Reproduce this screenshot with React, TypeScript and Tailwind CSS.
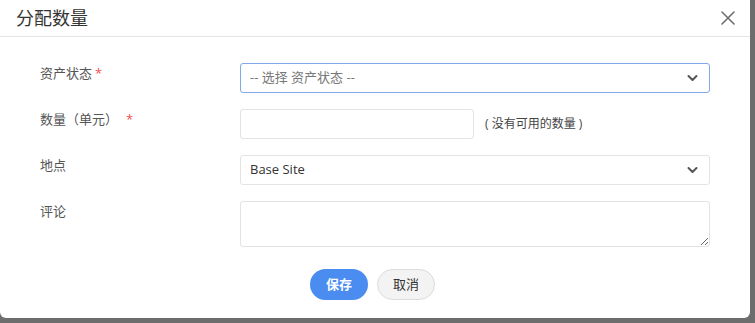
import { useState } from "react";

function Chevron() {
  return (
    <svg width="11" height="7" viewBox="0 0 11 7" className="pointer-events-none absolute right-[12px] top-1/2 -translate-y-1/2">
      <path d="M1.5 1.5 L5.5 5.5 L9.5 1.5" fill="none" stroke="#555" strokeWidth="2" strokeLinecap="round" strokeLinejoin="round" />
    </svg>
  );
}

function Label({ text, req, gap }: { text: string; req?: boolean; gap?: boolean }) {
  return (
    <div className="w-[240px] shrink-0 pl-[40px] pt-[1px] text-[13px] leading-[18px] text-[#555]">
      {text}
      {req ? <span className={gap ? "ml-[8px] text-[#f05050]" : "ml-[3px] text-[#f05050]"}>*</span> : null}
    </div>
  );
}

export default function App() {
  const [qty, setQty] = useState("");
  const [note, setNote] = useState("");

  return (
    <div
      className="h-[323px] w-[755px] overflow-hidden bg-[#6d6d6d]"
      style={{ fontFamily: '"Open Sans", "Noto Sans CJK SC", sans-serif' }}
    >
      <div className="flex h-[318px] w-[750px] flex-col rounded-b-[6px] bg-white">
        <div className="flex h-[37px] shrink-0 items-center justify-between border-b border-[#e5e5e5] pl-[16px] pr-[14px]">
          <h4 className="text-[18px] leading-[24px] text-[#333]">分配数量</h4>
          <button className="text-[#777]" title="关闭">
            <svg width="16" height="16" viewBox="0 0 16 16">
              <path d="M2 2 L14 14 M14 2 L2 14" stroke="#6f6f6f" strokeWidth="1.6" strokeLinecap="round" />
            </svg>
          </button>
        </div>

        <div className="flex flex-col gap-[16px] pt-[26px]">
          <div className="flex">
            <Label text="资产状态" req />
            <div className="relative w-[470px]">
              <div className="flex h-[30px] items-center rounded-[3px] border border-[#80a8ea] pl-[9px] text-[13px] text-[#777]">
                -- 选择 资产状态 --
              </div>
              <Chevron />
            </div>
          </div>

          <div className="flex">
            <Label text="数量（单元）" req gap />
            <input
              value={qty}
              onChange={(e) => setQty(e.target.value)}
              className="h-[30px] w-[234px] rounded-[3px] border border-[#e3e3e3] px-[9px] text-[13px] outline-none"
            />
            <span className="ml-[11px] self-center text-[12px] text-[#444]">( 没有可用的数量 )</span>
          </div>

          <div className="flex">
            <Label text="地点" />
            <div className="relative w-[470px]">
              <div className="flex h-[30px] items-center rounded-[3px] border border-[#e3e3e3] pl-[9px] text-[13px] text-[#333]">
                Base Site
              </div>
              <Chevron />
            </div>
          </div>

          <div className="flex">
            <Label text="评论" />
            <textarea
              value={note}
              onChange={(e) => setNote(e.target.value)}
              className="h-[46px] w-[470px] rounded-[3px] border border-[#e3e3e3] px-[9px] py-[5px] text-[13px] outline-none"
            />
          </div>
        </div>

        <div className="mt-[22px] flex justify-center gap-[9px] pr-[5px]">
          <button className="h-[31px] w-[58px] rounded-full bg-[#4a8cf0] text-[13px] font-bold text-white">保存</button>
          <button className="h-[31px] w-[58px] rounded-full border border-[#dcdcdc] bg-[#f3f3f3] text-[13px] text-[#333]">取消</button>
        </div>
      </div>
    </div>
  );
}
